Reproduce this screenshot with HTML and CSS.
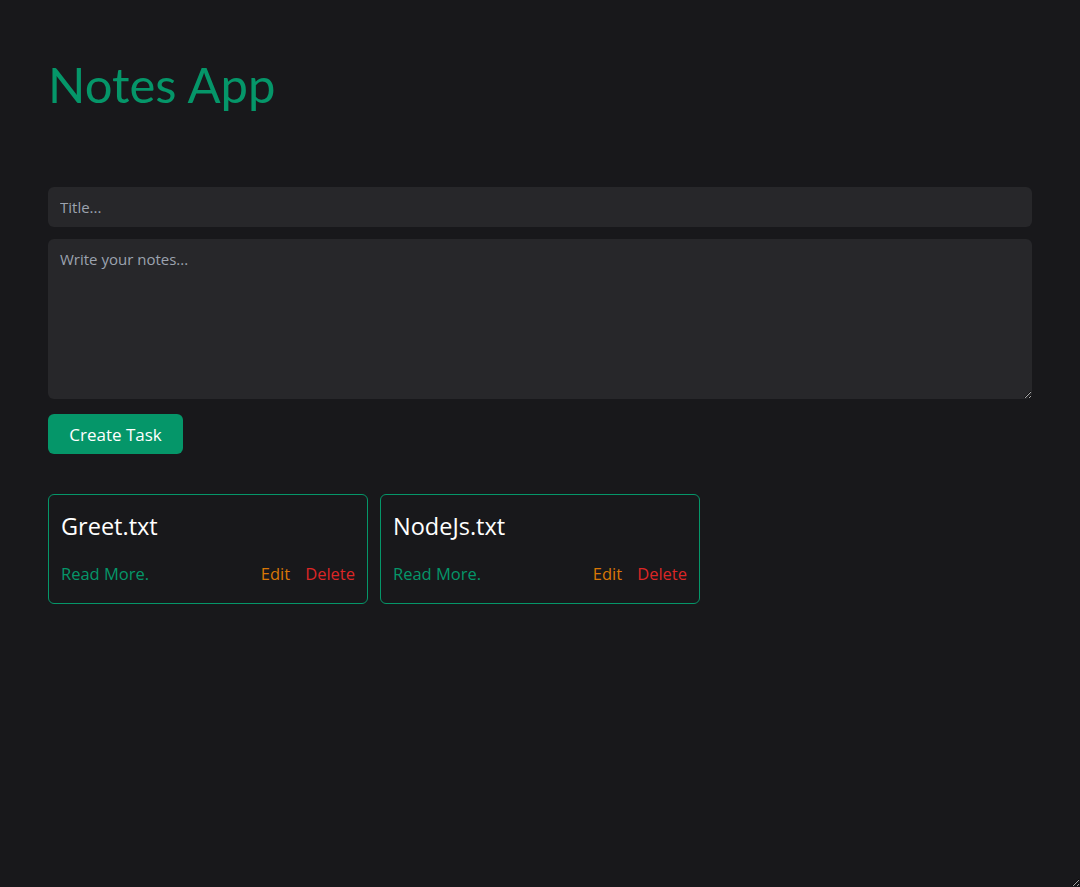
FILE: index.html
```html
<!DOCTYPE html>
<html lang="en">
<head>
<meta charset="utf-8">
<title>Notes App</title>
<link rel="stylesheet" href="styles.css">
</head>
<body>
<main class="app">
  <h1 class="app-title">Notes App</h1>
  <form class="note-form">
    <input class="field field-title" type="text" placeholder="Title...">
    <textarea class="field field-body" placeholder="Write your notes..."></textarea>
    <button class="btn-create" type="button">Create Task</button>
  </form>
  <section class="cards">
    <article class="card">
      <h2 class="card-title">Greet.txt</h2>
      <div class="card-actions">
        <a class="link link-read">Read More.</a>
        <div class="card-ops">
          <a class="link link-edit">Edit</a>
          <a class="link link-delete">Delete</a>
        </div>
      </div>
    </article>
    <article class="card">
      <h2 class="card-title">NodeJs.txt</h2>
      <div class="card-actions">
        <a class="link link-read">Read More.</a>
        <div class="card-ops">
          <a class="link link-edit">Edit</a>
          <a class="link link-delete">Delete</a>
        </div>
      </div>
    </article>
  </section>
</main>
</body>
</html>
```
FILE: styles.css
```css
* { box-sizing: border-box; }
html, body { margin: 0; height: 100%; }
body {
  background: #18181b;
  font-family: "Open Sans", "Liberation Sans", sans-serif;
  color: #fff;
}
.app {
  padding: 48px 48px;
  height: 100vh;
  overflow: auto;
  resize: both;
}
.app-title {
  margin: 0;
  font-family: Lato, "Open Sans", sans-serif;
  font-weight: 400;
  font-size: 49px;
  line-height: 72px;
  color: #059669;
}
.note-form {
  margin-top: 67px;
  display: flex;
  flex-direction: column;
  align-items: flex-start;
}
.field {
  width: 100%;
  background: #27272a;
  border: none;
  border-radius: 6px;
  color: #e5e7eb;
  font-family: "Open Sans", sans-serif;
  font-size: 15px;
  padding: 0 12px;
  outline: none;
}
.field::placeholder { color: #9ca3af; }
.field-title { height: 40px; }
.field-body {
  margin-top: 12px;
  height: 160px;
  padding-top: 10px;
  resize: vertical;
}
.btn-create {
  margin-top: 15px;
  height: 40px;
  width: 135px;
  border: none;
  border-radius: 6px;
  background: #059669;
  color: #fff;
  font-family: "Open Sans", sans-serif;
  font-size: 17px;
}
.cards {
  margin-top: 40px;
  display: flex;
  gap: 12px;
}
.card {
  width: 320px;
  height: 110px;
  border: 1px solid #059669;
  border-radius: 6px;
  padding: 14px 12px 17px;
  display: flex;
  flex-direction: column;
}
.card-title {
  margin: 0;
  font-size: 23.5px;
  font-weight: 500;
  line-height: 34px;
  color: #fff;
}
.card-actions {
  margin-top: auto;
  display: flex;
  justify-content: space-between;
  align-items: center;
  font-size: 16.5px;
  line-height: 24px;
}
.card-ops { display: flex; gap: 15px; }
.link { cursor: pointer; }
.link-read { color: #059669; }
.link-edit { color: #d97706; }
.link-delete { color: #dc2626; }
```
